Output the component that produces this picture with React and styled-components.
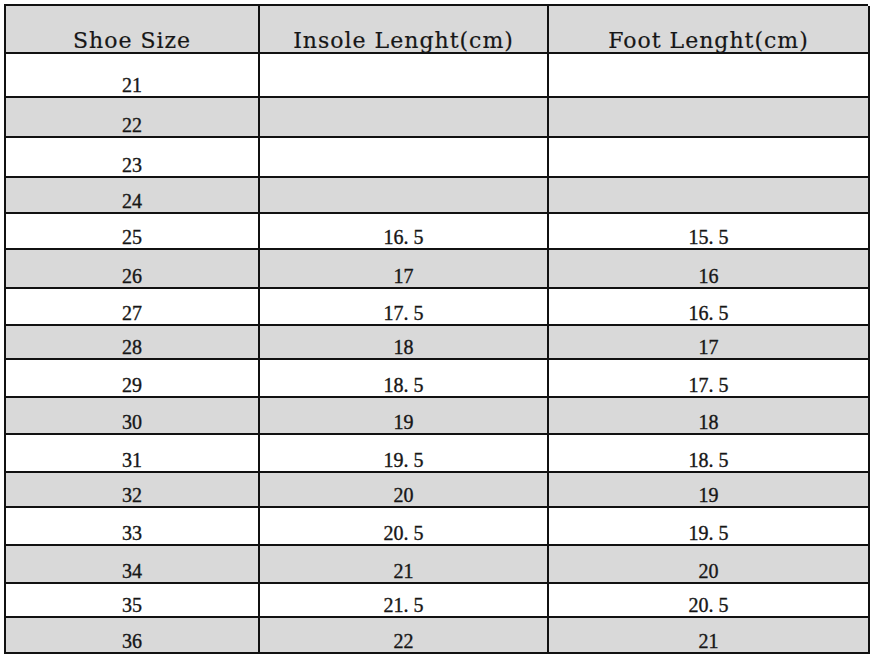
import React from "react";
import styled, { createGlobalStyle } from "styled-components";

const GlobalStyle = createGlobalStyle`
  html, body {
    margin: 0;
    padding: 0;
    background: #fff;
  }
  * {
    box-sizing: border-box;
  }
`;

const Page = styled.div`
  width: 873px;
  height: 656px;
  padding: 4px 5px 0 4px;
  overflow: hidden;
`;

const Table = styled.div`
  display: grid;
  grid-template-columns: 254px 289px 321px;
  border-top: 2px solid #111;
  border-left: 2px solid #111;
`;

const Cell = styled.div`
  height: ${(p) => p.$h}px;
  background: ${(p) => (p.$shade ? "#d9d9d9" : "#fff")};
  border-right: 2px solid #111;
  border-bottom: 2px solid #111;
  display: flex;
  align-items: flex-end;
  justify-content: center;
  padding-bottom: 1px;
  color: #161616;
  font-family: "Liberation Serif", "Noto Sans CJK SC", serif;
  font-size: 20px;
  line-height: 1;
  -webkit-text-stroke: 0.35px #161616;
  white-space: pre;
`;

const HeadCell = styled(Cell)`
  padding-bottom: 0;
  font-family: "DejaVu Serif", "Noto Sans CJK SC", serif;
  font-size: 22px;
  letter-spacing: 1px;
  -webkit-text-stroke: 0.2px #161616;
`;

const headers = ["Shoe Size", "Insole Lenght(cm)", "Foot Lenght(cm)"];

const rows = [
  { size: "21", insole: "", foot: "", h: 44 },
  { size: "22", insole: "", foot: "", h: 40 },
  { size: "23", insole: "", foot: "", h: 40 },
  { size: "24", insole: "", foot: "", h: 36 },
  { size: "25", insole: "16. 5", foot: "15. 5", h: 36 },
  { size: "26", insole: "17", foot: "16", h: 39 },
  { size: "27", insole: "17. 5", foot: "16. 5", h: 37 },
  { size: "28", insole: "18", foot: "17", h: 34 },
  { size: "29", insole: "18. 5", foot: "17. 5", h: 38 },
  { size: "30", insole: "19", foot: "18", h: 37 },
  { size: "31", insole: "19. 5", foot: "18. 5", h: 38 },
  { size: "32", insole: "20", foot: "19", h: 35 },
  { size: "33", insole: "20. 5", foot: "19. 5", h: 38 },
  { size: "34", insole: "21", foot: "20", h: 38 },
  { size: "35", insole: "21. 5", foot: "20. 5", h: 34 },
  { size: "36", insole: "22", foot: "21", h: 36 },
];

export default function App() {
  return (
    <Page>
      <GlobalStyle />
      <Table>
        {headers.map((h) => (
          <HeadCell key={h} $shade $h={48}>
            {h}
          </HeadCell>
        ))}
        {rows.map((r, i) => {
          const shade = i % 2 === 1;
          return (
            <React.Fragment key={r.size}>
              <Cell $shade={shade} $h={r.h}>{r.size}</Cell>
              <Cell $shade={shade} $h={r.h}>{r.insole}</Cell>
              <Cell $shade={shade} $h={r.h}>{r.foot}</Cell>
            </React.Fragment>
          );
        })}
      </Table>
    </Page>
  );
}
